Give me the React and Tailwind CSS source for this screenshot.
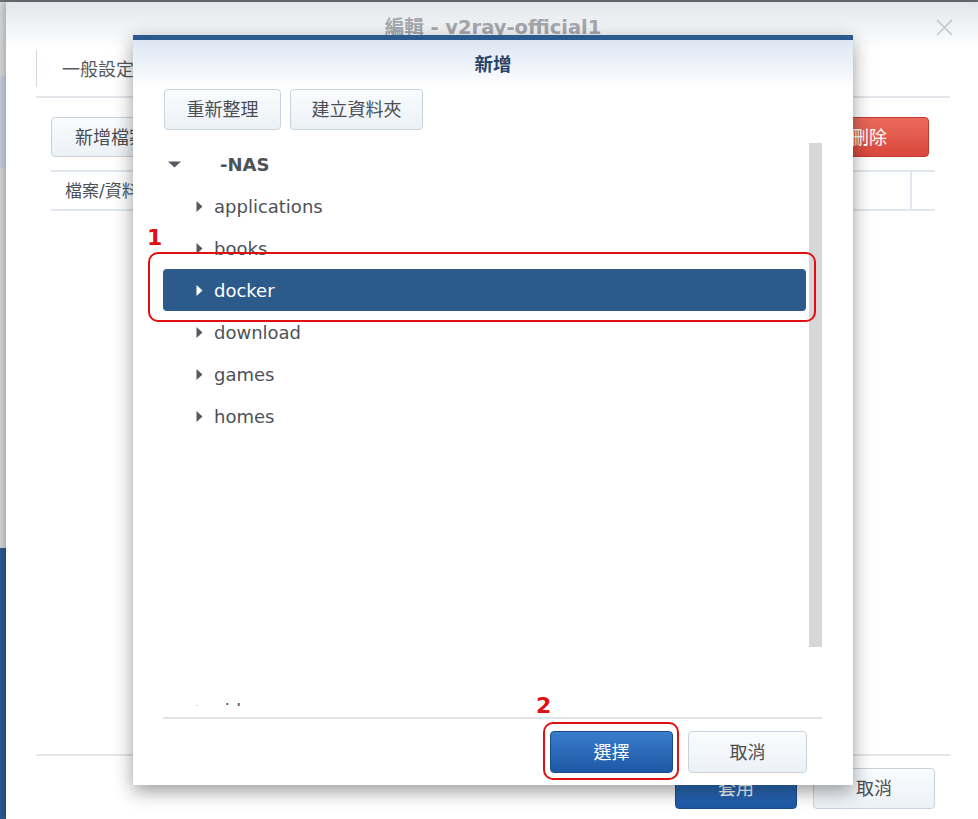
import React from "react";

const font = "font-['DejaVu_Sans','Noto_Sans_CJK_TC',sans-serif]";

function CaretRight({ color = "#555a60" }) {
  return (
    <svg width="7" height="11" viewBox="0 0 7 11" className="shrink-0">
      <polygon points="0.5,0 6.5,5.5 0.5,11" fill={color} />
    </svg>
  );
}

function CaretDown() {
  return (
    <svg width="13" height="7" viewBox="0 0 13 7" className="shrink-0">
      <polygon points="0,0.5 13,0.5 6.5,6.5" fill="#555a60" />
    </svg>
  );
}

const lightBtn =
  "flex items-center justify-center rounded-[4px] border border-[#c9d3dd] bg-linear-to-b from-[#fafcfe] to-[#ecf1f6] text-[18px] text-[#4a4d52]";
const blueBtn =
  "flex items-center justify-center rounded-[4px] border border-[#1a4c8c] bg-linear-to-b from-[#3a7dcc] to-[#1d58a5] text-[18px] text-white";

function Row({ name, selected }) {
  return (
    <div
      className={
        "h-[42px] flex items-center pl-[33px] gap-[11px] rounded-[4px] " +
        (selected ? "bg-[#2b5a8b] text-white" : "text-[#4c5259]")
      }
    >
      <CaretRight color={selected ? "#ffffff" : "#555a60"} />
      <span className="text-[18px] leading-none pt-[2px]">{name}</span>
    </div>
  );
}

export default function App() {
  const children = ["applications", "books", "docker", "download", "games", "homes"];
  return (
    <div className={"relative w-[978px] h-[819px] overflow-hidden bg-[#d8d9db] " + font}>
      <div className="h-[2px] bg-[#6d7176]" />
      <div className="flex h-[817px]">
        {/* desktop strip behind the window */}
        <div className="w-[6px] shrink-0 flex flex-col">
          <div className="h-[74px] bg-[#d9dadc]" />
          <div className="h-[92px] bg-[#c7d1dd]" />
          <div className="flex-1 bg-[#d6d7d9]" />
          <div className="h-[271px] bg-[#2c5994]" />
        </div>

        {/* main edit window */}
        <div className="w-[974px] shrink-0 bg-white flex flex-col shadow-[-2px_0_8px_rgba(0,0,0,0.25)]">
          <div className="h-[48px] relative flex items-center justify-center pt-[4px] bg-linear-to-b from-[#e3e6ea] to-[#ffffff]">
            <span className="text-[19.5px] font-bold text-[#a4a8ad] leading-none">編輯 - v2ray-official1</span>
            <svg className="absolute right-[27px] top-[17px]" width="17" height="17" viewBox="0 0 17 17">
              <path d="M1 1 L16 16 M16 1 L1 16" stroke="#c3c6ca" strokeWidth="1.6" />
            </svg>
          </div>

          <div className="mx-[30px] flex flex-col">
            <div className="h-[37px] border-l border-[#cfd8e3] pl-[25px] flex items-center">
              <span className="text-[18px] text-[#555a60] pt-[2px]">一般設定</span>
            </div>
            <div className="h-[9px]" />
            <div className="h-[2px] bg-[#e3e6ea]" />
          </div>

          <div className="mx-[30px] mt-[19px] pl-[15px] pr-[21px] flex justify-between">
            <div className={lightBtn + " h-[40px] w-[120px]"}>新增檔案</div>
            <div className="h-[40px] w-[120px] flex items-center justify-center rounded-[4px] border border-[#c23a2f] bg-linear-to-b from-[#e96a5c] to-[#d9473b] text-[18px] text-white">
              刪除
            </div>
          </div>

          <div className="mx-[30px] mt-[13px] px-[15px]">
            <div className="h-[41px] border-y-2 border-[#e0e7ef] flex items-center">
              <span className="pl-[14px] text-[17px] text-[#4c5259] flex-1 pt-[2px]">檔案/資料夾</span>
              <div className="w-[2px] self-stretch bg-[#e0e7ef] mr-[23px]" />
            </div>
          </div>

          <div className="flex-1" />

          <div className="mx-[30px] h-[2px] bg-[#e3e6ea]" />
          <div className="mx-[30px] mt-[12px] pr-[15px] flex justify-end gap-[16px]">
            <div className={blueBtn + " h-[41px] w-[122px]"}>套用</div>
            <div className={lightBtn + " h-[41px] w-[122px]"}>取消</div>
          </div>
          <div className="h-[10px]" />
        </div>
      </div>

      {/* modal dialog */}
      <div className="absolute left-[133px] top-[35px] w-[720px] h-[750px] bg-white border-t-[5px] border-[#2b5a8e] flex flex-col shadow-[0_6px_18px_rgba(0,0,0,0.4)]">
        <div className="bg-linear-to-b from-[#dce6f2] to-[#ffffff] h-[49px] flex items-center justify-center pt-[2px]">
          <span className="text-[18.5px] font-bold text-[#27446b] leading-none">新增</span>
        </div>
        <div className="h-[41px] pl-[31px] flex gap-[9px]">
          <div className={lightBtn + " w-[117px]"}>重新整理</div>
          <div className={lightBtn + " w-[133px]"}>建立資料夾</div>
        </div>

        <div className="mt-[13px] mx-[30px] mr-[31px] h-[574px] flex gap-[3px]">
          <div className="w-[643px] h-[563px] overflow-hidden flex flex-col">
            <div className="h-[42px] shrink-0 flex items-center pl-[5px]">
              <CaretDown />
              <span className="ml-[39px] text-[18px] font-bold text-[#4c5259] leading-none pt-[2px]">-NAS</span>
            </div>
            {children.map((c) => (
              <div key={c} className="shrink-0">
                <Row name={c} selected={c === "docker"} />
              </div>
            ))}
            <div className="h-[252px] shrink-0" />
            <div className="shrink-0">
              <Row name="video" />
            </div>
          </div>
          <div className="w-[13px] h-[504px] bg-[#d6d7d9]" />
        </div>

        <div className="mx-[30px] mr-[31px] h-[2px] bg-[#e2e3e6]" />
        <div className="mt-[12px] h-[42px] pr-[46px] flex justify-end gap-[15px]">
          <div className={blueBtn + " w-[123px]"}>選擇</div>
          <div className={lightBtn + " w-[119px]"}>取消</div>
        </div>
      </div>

      {/* annotations */}
      <div className="absolute left-[148px] top-[252px] w-[668px] h-[70px] border-2 border-[#e01010] rounded-[10px]" />
      <div className="absolute left-[147px] top-[224px] text-[22px] font-bold text-[#e01010] leading-[28px]">1</div>
      <div className="absolute left-[543px] top-[722px] w-[136px] h-[58px] border-2 border-[#e01010] rounded-[10px]" />
      <div className="absolute left-[536px] top-[692px] text-[22px] font-bold text-[#e01010] leading-[28px]">2</div>
    </div>
  );
}
